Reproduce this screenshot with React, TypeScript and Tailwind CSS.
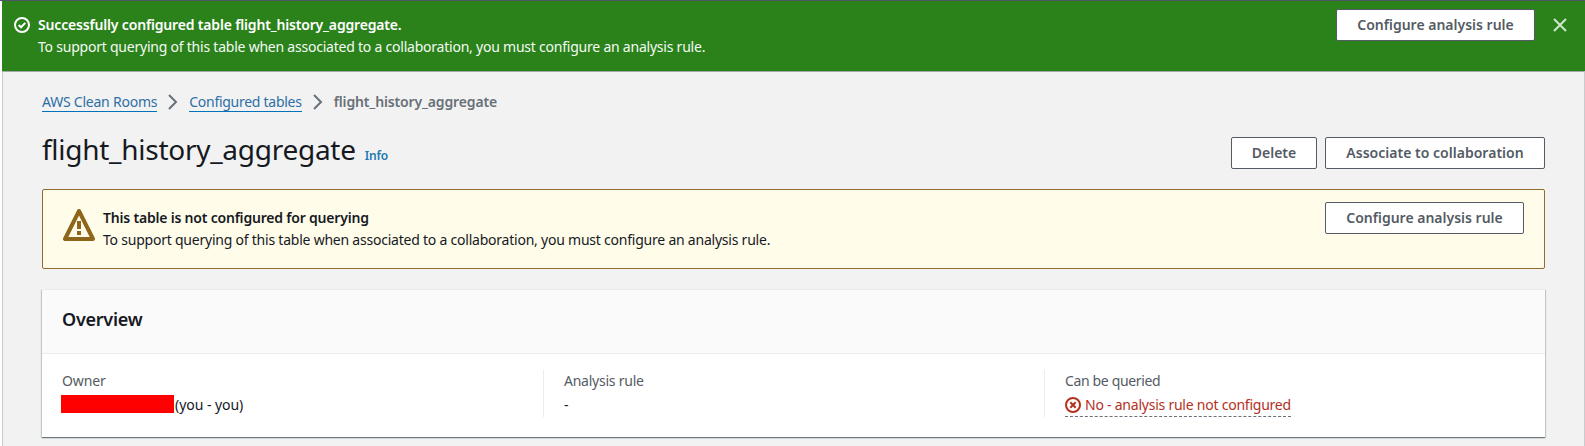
import type { ReactNode } from "react";

function Button({ children, className = "" }: { children: ReactNode; className?: string }) {
  return (
    <button
      className={`flex h-8 shrink-0 items-center justify-center rounded-xs border border-[#545b64] bg-white font-semibold text-[#545b64] ${className}`}
    >
      {children}
    </button>
  );
}

function CheckCircle() {
  return (
    <svg viewBox="0 0 16 16" className="mt-[3px] size-4 shrink-0 fill-none stroke-white stroke-2">
      <circle cx="8" cy="8" r="7" />
      <path d="M4.7 8l2.3 2.3 4.3-4.4" />
    </svg>
  );
}

function ErrorCircle() {
  return (
    <svg viewBox="0 0 16 16" className="mt-[3px] mr-1 size-4 shrink-0 fill-none stroke-[#b3311d] stroke-2">
      <circle cx="8" cy="8" r="7" />
      <path d="M5.3 5.3l5.4 5.4M10.7 5.3l-5.4 5.4" />
    </svg>
  );
}

function Warning() {
  return (
    <svg viewBox="0 0 32 32" className="size-8 shrink-0 fill-none stroke-[#8d6619]">
      <path d="M16 2L2 30h28z" strokeWidth="4" strokeLinejoin="round" />
      <path d="M16 12v8M16 22v4" strokeWidth="4" />
    </svg>
  );
}

function Close() {
  return (
    <svg viewBox="0 0 16 16" className="mt-[3px] mr-[17px] ml-[17px] size-4 shrink-0 fill-none stroke-[#cfe6cb] stroke-2">
      <path d="M2 2l12 12M14 2L2 14" />
    </svg>
  );
}

function Chevron({ className }: { className: string }) {
  return (
    <svg viewBox="0 0 10 16" className={`h-4 w-2.5 fill-none stroke-[#687078] stroke-2 ${className}`}>
      <path d="M1 1l7 7-7 7" />
    </svg>
  );
}

function Field({ label, labelClass, children }: { label: string; labelClass: string; children: ReactNode }) {
  return (
    <div>
      <div className={`h-6 text-[#545b64] ${labelClass}`}>{label}</div>
      {children}
    </div>
  );
}

export default function App() {
  return (
    <div className="flex h-[446px] flex-col overflow-hidden bg-white pl-[2px] font-['Noto_Sans','Open_Sans',sans-serif] text-[14px] leading-[22px] text-[#16191f]">
      <div className="-ml-[2px] h-px shrink-0 bg-[#4d5567]" />
      <header className="flex h-[70px] shrink-0 items-start bg-[#2b821b] text-[#f4faf3]">
        <div className="flex grow pt-[13px] pl-3">
          <CheckCircle />
          <div className="pl-2">
            <div className="font-semibold tracking-[-0.17px] text-white">
              Successfully configured table flight_history_aggregate.
            </div>
            <div className="tracking-[-0.225px]">
              To support querying of this table when associated to a collaboration, you must configure an analysis rule.
            </div>
          </div>
        </div>
        <div className="flex pt-2">
          <Button className="w-[199px]">Configure analysis rule</Button>
          <div className="pt-[5px]">
            <Close />
          </div>
        </div>
      </header>

      <main className="grow border-x border-t border-t-[#a3aaa6] border-r-[#c9cccc] border-l-[#c9cccc] bg-[#f2f2f2] pr-[39px] pl-[39px]">
        <nav className="mt-[19px] flex h-[22px]">
          <a className="h-[21px] border-b border-[#0073bb] tracking-[-0.23px] text-[#2d6fa6]">AWS Clean Rooms</a>
          <Chevron className="mt-[3px] mr-[11px] ml-[11px]" />
          <a className="h-[21px] border-b border-[#0073bb] tracking-[-0.27px] text-[#2d6fa6]">Configured tables</a>
          <Chevron className="mt-[3px] mr-[11px] ml-[11px]" />
          <span className="font-semibold tracking-[-0.14px] text-[#687078]">flight_history_aggregate</span>
        </nav>

        <div className="mt-6 flex h-8 items-start justify-between">
          <div className="-mt-1.5 flex items-baseline">
            <h1 className="text-[28px] leading-9 tracking-[-0.27px]">flight_history_aggregate</h1>
            <a className="ml-[9px] text-[12px] font-semibold tracking-[-0.2px] text-[#2278b0]">Info</a>
          </div>
          <div className="flex gap-2">
            <Button className="w-[86px]">Delete</Button>
            <Button className="w-[220px] tracking-[0.02px]">Associate to collaboration</Button>
          </div>
        </div>

        <section className="mt-5 flex h-20 items-start rounded-xs border border-[#906c32] bg-[#fffce9] pr-5 pl-5">
          <div className="pt-[19px]">
            <Warning />
          </div>
          <div className="grow pt-[17px] pl-2">
            <div className="font-semibold tracking-[-0.2px]">This table is not configured for querying</div>
            <div className="tracking-[-0.225px]">
              To support querying of this table when associated to a collaboration, you must configure an analysis rule.
            </div>
          </div>
          <Button className="mt-3 w-[199px]">Configure analysis rule</Button>
        </section>

        <section className="mt-5 h-[148px] bg-white shadow-[0_1px_1px_0_rgba(0,28,36,0.4),1px_1px_1px_0_rgba(0,28,36,0.15),-1px_1px_1px_0_rgba(0,28,36,0.15)]">
          <div className="h-[65px] border-t border-b border-[#eaeded] bg-[#fafafa] pt-[18px] pl-5">
            <h2 className="text-[18px] leading-[22px] font-semibold tracking-[-0.25px]">Overview</h2>
          </div>
          <div className="flex pt-4">
            <div className="w-[501px] pl-5">
              <Field label="Owner" labelClass="tracking-[-0.15px]">
                <div className="flex h-[22px]">
                  <div className="mt-px mr-px -ml-px h-[18px] w-[113px] bg-[#ff0000]" />
                  <span className="tracking-[-0.04px]">(you - you)</span>
                </div>
              </Field>
            </div>
            <div className="h-[47px] w-[501px] border-l border-[#eaeded] pl-5">
              <Field label="Analysis rule" labelClass="tracking-[-0.24px]">
                <div>-</div>
              </Field>
            </div>
            <div className="h-[47px] border-l border-[#eaeded] pl-5">
              <Field label="Can be queried" labelClass="tracking-[-0.35px]">
                <div className="flex h-[23px] w-[226px] border-b border-dashed border-[#687078] text-[#b3311d]">
                  <ErrorCircle />
                  <span className="tracking-[-0.235px] whitespace-nowrap">No - analysis rule not configured</span>
                </div>
              </Field>
            </div>
          </div>
        </section>
      </main>
    </div>
  );
}
